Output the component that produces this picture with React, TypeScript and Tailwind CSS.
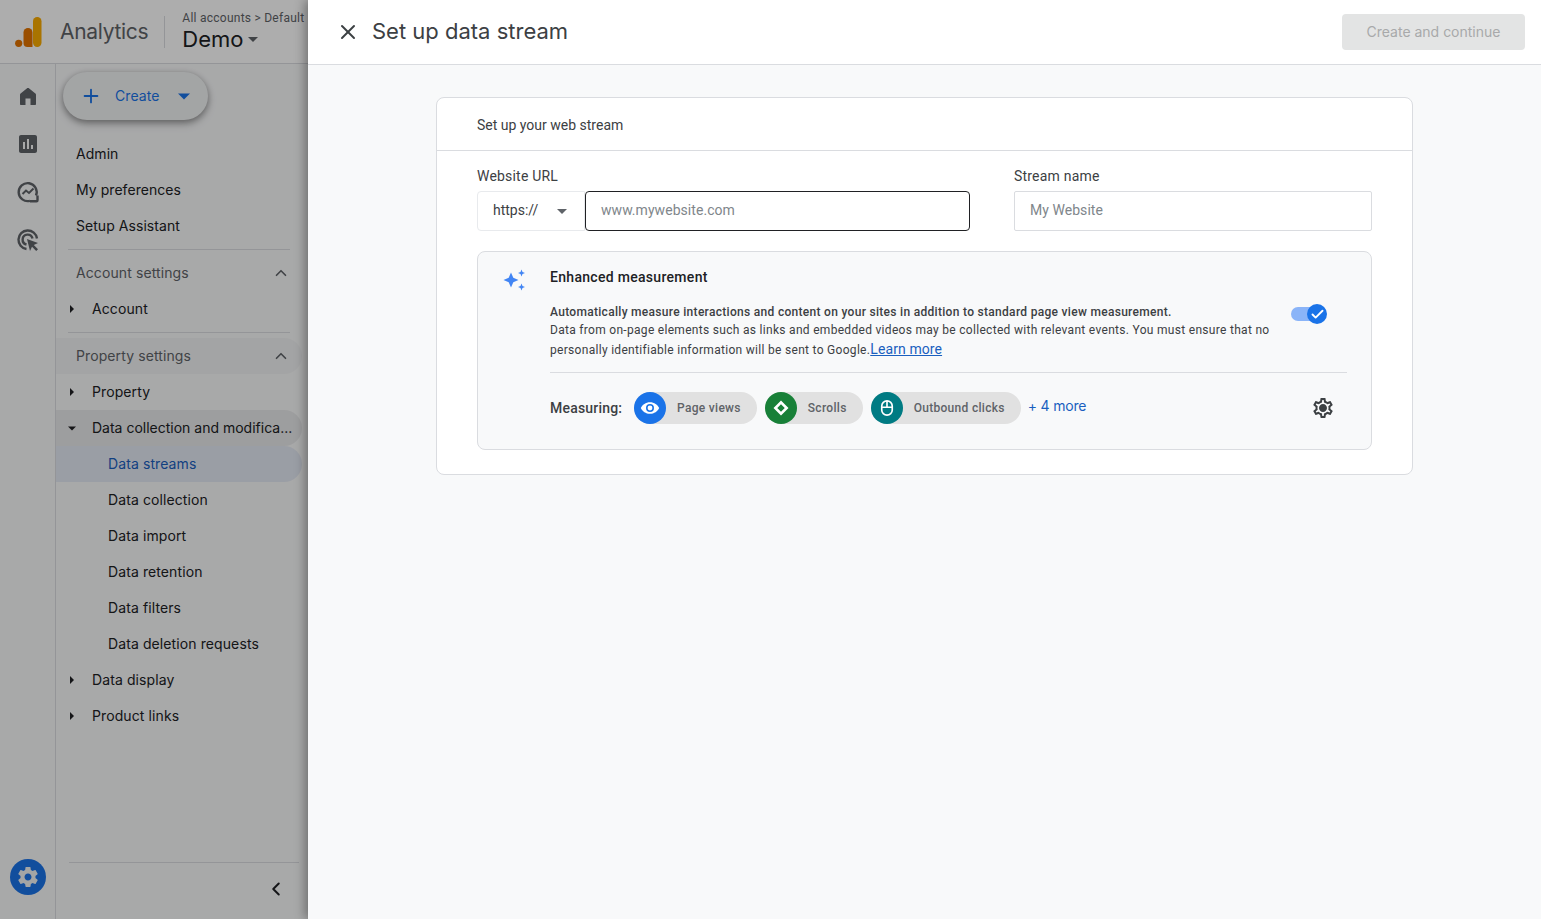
import React from 'react';
import { Plus, X, ChevronUp, ChevronLeft, Check } from 'lucide-react';

const GEAR_OUTLINE =
  'M19.43 12.98c.04-.32.07-.64.07-.98 0-.34-.03-.66-.07-.98l2.11-1.65c.19-.15.24-.42.12-.64l-2-3.46c-.09-.16-.26-.25-.44-.25-.06 0-.12.01-.17.03l-2.49 1c-.52-.4-1.08-.73-1.69-.98l-.38-2.65C14.46 2.18 14.25 2 14 2h-4c-.25 0-.46.18-.49.42l-.38 2.65c-.61.25-1.17.59-1.69.98l-2.49-1c-.06-.02-.12-.03-.18-.03-.17 0-.34.09-.43.25l-2 3.46c-.13.22-.07.49.12.64l2.11 1.65c-.04.32-.07.65-.07.98 0 .33.03.66.07.98l-2.11 1.65c-.19.15-.24.42-.12.64l2 3.46c.09.16.26.25.44.25.06 0 .12-.01.17-.03l2.49-1c.52.4 1.08.73 1.69.98l.38 2.65c.03.24.24.42.49.42h4c.25 0 .46-.18.49-.42l.38-2.65c.61-.25 1.17-.59 1.69-.98l2.49 1c.06.02.12.03.18.03.17 0 .34-.09.43-.25l2-3.46c.12-.22.07-.49-.12-.64l-2.11-1.65zm-1.98-1.71c.04.31.05.52.05.73 0 .21-.02.43-.05.73l-.14 1.13.89.7 1.08.84-.7 1.21-1.27-.51-1.04-.42-.9.68c-.43.32-.84.56-1.25.73l-1.06.43-.16 1.13-.2 1.35h-1.4l-.19-1.35-.16-1.13-1.06-.43c-.43-.18-.83-.41-1.23-.71l-.91-.7-1.06.43-1.27.51-.7-1.21 1.08-.84.89-.7-.14-1.13c-.03-.31-.05-.54-.05-.74s.02-.43.05-.73l.14-1.13-.89-.7-1.08-.84.7-1.21 1.27.51 1.04.42.9-.68c.43-.32.84-.56 1.25-.73l1.06-.43.16-1.13.2-1.35h1.39l.19 1.35.16 1.13 1.06.43c.43.18.83.41 1.23.71l.91.7 1.06-.43 1.27-.51.7 1.21-1.07.85-.89.7.14 1.13zM12 8c-2.21 0-4 1.79-4 4s1.79 4 4 4 4-1.79 4-4-1.79-4-4-4zm0 6c-1.1 0-2-.9-2-2s.9-2 2-2 2 .9 2 2-.9 2-2 2z';
const GEAR_FILLED =
  'M19.43 12.98c.04-.32.07-.64.07-.98 0-.34-.03-.66-.07-.98l2.11-1.65c.19-.15.24-.42.12-.64l-2-3.46c-.09-.16-.26-.25-.44-.25-.06 0-.12.01-.17.03l-2.49 1c-.52-.4-1.08-.73-1.69-.98l-.38-2.65C14.46 2.18 14.25 2 14 2h-4c-.25 0-.46.18-.49.42l-.38 2.65c-.61.25-1.17.59-1.69.98l-2.49-1c-.06-.02-.12-.03-.18-.03-.17 0-.34.09-.43.25l-2 3.46c-.13.22-.07.49.12.64l2.11 1.65c-.04.32-.07.65-.07.98 0 .33.03.66.07.98l-2.11 1.65c-.19.15-.24.42-.12.64l2 3.46c.09.16.26.25.44.25.06 0 .12-.01.17-.03l2.49-1c.52.4 1.08.73 1.69.98l.38 2.65c.03.24.24.42.49.42h4c.25 0 .46-.18.49-.42l.38-2.65c.61-.25 1.17-.59 1.69-.98l2.49 1c.06.02.12.03.18.03.17 0 .34-.09.43-.25l2-3.46c.12-.22.07-.49-.12-.64l-2.11-1.65zM12 15.5c-1.93 0-3.5-1.57-3.5-3.5s1.57-3.5 3.5-3.5 3.5 1.57 3.5 3.5-1.57 3.5-3.5 3.5z';

const Logo = () => (
  <svg width="28" height="32" viewBox="0 0 28 32" className="shrink-0">
    <rect x="18" y="1" width="8.500" height="30" rx="4.200" fill="#f9ab00" />
    <path d="M8.500 16.500a4.500 4.500 0 0 1 9 0V31H12.500A4 4 0 0 1 8.500 27z" fill="#e37400" />
    <circle cx="3.700" cy="27.300" r="3.600" fill="#e37400" />
  </svg>
);

const Caret = ({ dir, className }: { dir: 'right' | 'down'; className?: string }) => (
  <svg width="10" height="10" viewBox="0 0 10 10" className={className}>
    {dir === 'right' ? <path d="M3 1l4 4-4 4z" fill="currentColor" /> : <path d="M0 3h10L5 8z" fill="currentColor" />}
  </svg>
);

const RailIcon = ({ children }: { children: React.ReactNode }) => (
  <div className="w-[48px] h-[48px] flex items-center justify-center text-[#5f6368]">{children}</div>
);

const NavItem = ({ label, href }: { label: string; href?: boolean }) => (
  <div
    className={
      'h-[36px] flex items-center pl-[52px] mr-[6px] rounded-r-full text-sm tracking-[0.1px] ' +
      (href ? 'bg-[#e4e9f3] text-[#1a5fbf]' : 'text-[#202124]')
    }
  >
    {label}
  </div>
);

const Branch = ({ label, open, shaded }: { label: string; open?: boolean; shaded?: boolean }) => (
  <div
    className={
      'h-[36px] flex items-center pl-[11px] mr-[6px] rounded-r-full text-sm text-[#202124] whitespace-nowrap ' +
      (shaded ? 'bg-[#e8e9ea] tracking-normal' : 'tracking-[0.1px]')
    }
  >
    <Caret dir={open ? 'down' : 'right'} className={open ? 'w-[8px] ml-[1px] mr-[16px] shrink-0' : 'mr-[15px] shrink-0'} />
    <span>{label}</span>
  </div>
);

const SectionHead = ({ label, shaded }: { label: string; shaded?: boolean }) => (
  <div
    className={
      'h-[36px] flex items-center justify-between pl-[20px] pr-[12px] mr-[6px] rounded-r-full text-sm tracking-[0.1px] text-[#5f6368] ' +
      (shaded ? 'bg-[#f1f2f3]' : '')
    }
  >
    <span>{label}</span>
    <ChevronUp size={18} strokeWidth={2.2} />
  </div>
);

const Chip = ({ label, color, icon }: { label: string; color: string; icon: React.ReactNode }) => (
  <div className="h-[32px] flex items-center bg-[#e1e1e1] rounded-full pr-[16px]">
    <div className={'w-[32px] h-[32px] rounded-full flex items-center justify-center mr-[11px] ' + color}>{icon}</div>
    <span className="text-xs font-medium tracking-[0.3px] text-[#5f6368]">{label}</span>
  </div>
);

export default function App() {
  return (
    <div className="flex w-full h-[919px] overflow-hidden bg-[#f8f9fa] font-['Roboto',sans-serif] text-[#202124]">
      {/* dimmed app behind the drawer */}
      <div className="relative w-[308px] shrink-0 flex flex-col bg-white font-['Inter',sans-serif]">
        <div className="h-[64px] shrink-0 flex items-center pl-[15px] border-b border-[#dadce0] whitespace-nowrap">
          <Logo />
          <span className="ml-[17px] text-[21px] tracking-[-0.3px] text-[#5f6368]">Analytics</span>
          <div className="w-px h-[32px] bg-[#dadce0] ml-[16px] mr-[17px]" />
          <div className="flex flex-col">
            <span className="text-xs leading-[14px] text-[#5f6368] font-['Roboto',sans-serif] tracking-[0.25px]">
              All accounts &gt; Default
            </span>
            <span className="flex items-center text-[22px] leading-[28px] text-[#202124]">
              Demo
              <Caret dir="down" className="ml-[4px] text-[#5f6368]" />
            </span>
          </div>
        </div>

        <div className="flex-1 flex min-h-0 bg-[#f8f9fa]">
          <div className="w-[56px] shrink-0 flex flex-col items-center pt-[8px] pb-[24px] border-r border-[#dadce0]">
            <RailIcon>
              <svg width="24" height="24" viewBox="0 0 24 24" fill="currentColor">
                <path d="M4 20v-9.200c0-.5.2-.9.6-1.200l6.200-5.100c.7-.6 1.700-.6 2.400 0l6.200 5.100c.4.3.6.7.6 1.200V20c0 .6-.4 1-1 1h-4.500v-6.500h-5V21H5c-.6 0-1-.4-1-1z" />
              </svg>
            </RailIcon>
            <RailIcon>
              <svg width="24" height="24" viewBox="0 0 24 24" fill="currentColor">
                <path d="M19 3H5c-1.100 0-2 .9-2 2v14c0 1.100.9 2 2 2h14c1.100 0 2-.9 2-2V5c0-1.100-.9-2-2-2zM9 17H7v-7h2v7zm4 0h-2V7h2v10zm4 0h-2v-4h2v4z" />
              </svg>
            </RailIcon>
            <RailIcon>
              <svg width="24" height="24" viewBox="0 0 24 24" fill="none" stroke="currentColor" strokeWidth="2.400">
                <path d="M20 15.500A9 9 0 1 0 14 20.800" />
                <path d="M6.500 14l3.500-3.500 3 2.500 4.500-4.500" strokeWidth="2" />
                <path d="M14 21.300h6.500a1 1 0 0 0 1-1V15.500" strokeWidth="2.400" />
              </svg>
            </RailIcon>
            <RailIcon>
              <svg width="24" height="24" viewBox="0 0 24 24" fill="none" stroke="currentColor" strokeWidth="2.400">
                <path d="M10.500 21A9.300 9.300 0 1 1 21 10.500" />
                <path d="M10.500 16.500A5 5 0 1 1 16.500 10.500" />
                <path d="M11 11l11 4-4.200 2 4.200 4.200-1.800 1.800-4.200-4.200-2 4.200z" fill="currentColor" stroke="none" />
              </svg>
            </RailIcon>
            <div className="mt-auto w-[36px] h-[36px] rounded-full bg-[#1a73e8] flex items-center justify-center">
              <svg width="24" height="24" viewBox="0 0 24 24" fill="#f1f3f4" fillRule="evenodd">
                <path d={GEAR_FILLED} />
              </svg>
            </div>
          </div>

          <div className="flex-1 min-w-0 flex flex-col pt-[8px]">
            <div className="h-[48px] w-[145px] ml-[7px] shrink-0 rounded-full bg-[#f1f3f4] shadow-[0_2px_6px_rgba(0,0,0,0.3),0_4px_10px_rgba(0,0,0,0.2)] flex items-center pl-[17px] text-[#1a73e8]">
              <Plus size={22} strokeWidth={2} />
              <span className="ml-[13px] text-sm tracking-[0.1px]">Create</span>
              <Caret dir="down" className="ml-[18px] w-[12px] h-[12px]" />
            </div>

            <div className="mt-[16px] text-sm tracking-[0.05px] text-[#202124]">
              <div className="h-[36px] flex items-center pl-[20px]">Admin</div>
              <div className="h-[36px] flex items-center pl-[20px]">My preferences</div>
              <div className="h-[36px] flex items-center pl-[20px]">Setup Assistant</div>
            </div>

            <div className="h-px bg-[#dadce0] ml-[12px] mr-[18px] mt-[5px] mb-[5px]" />
            <SectionHead label="Account settings" />
            <Branch label="Account" />
            <div className="h-px bg-[#dadce0] ml-[12px] mr-[18px] mt-[5px] mb-[5px]" />
            <SectionHead label="Property settings" shaded />
            <Branch label="Property" />
            <Branch label="Data collection and modifica..." open shaded />
            <NavItem label="Data streams" href />
            <NavItem label="Data collection" />
            <NavItem label="Data import" />
            <NavItem label="Data retention" />
            <NavItem label="Data filters" />
            <NavItem label="Data deletion requests" />
            <Branch label="Data display" />
            <Branch label="Product links" />

            <div className="mt-auto h-[57px] ml-[13px] mr-[9px] border-t border-[#dadce0] flex items-center justify-end pr-[12px] pb-[4px] text-[#202124]">
              <ChevronLeft size={22} strokeWidth={2.2} />
            </div>
          </div>
        </div>

        <div className="absolute inset-0 bg-black/32" />
      </div>

      {/* drawer */}
      <div className="relative z-10 flex-1 min-w-0 flex flex-col bg-[#f8f9fa] shadow-[-3px_0_10px_rgba(0,0,0,0.35)]">
        <div className="h-[65px] shrink-0 bg-white border-b border-[#dadce0] flex items-center pl-[28px] pr-[16px]">
          <X size={24} strokeWidth={2} className="text-[#3c4043]" />
          <h1 className="ml-[12px] pb-[2px] text-[22px] font-['Inter',sans-serif] text-[#3c4043]">Set up data stream</h1>
          <button className="ml-auto w-[183px] h-[36px] rounded-[4px] bg-[#e3e4e4] text-sm font-['Inter',sans-serif] text-[#a8a9aa]">
            Create and continue
          </button>
        </div>

        <div className="pt-[32px] px-[128px]">
          <div className="bg-white border border-[#dadce0] rounded-lg">
            <div className="h-[53px] flex items-center pl-[40px] pt-[2px] border-b border-[#dadce0] text-sm text-[#3c4043]">
              Set up your web stream
            </div>
            <div className="pt-[16px] px-[40px] pb-[24px]">
              <div className="flex">
                <div className="w-[493px]">
                  <div className="text-sm leading-[18px] tracking-[0.2px] text-[#3c4043] mb-[6px]">Website URL</div>
                  <div className="flex h-[40px]">
                    <div className="w-[108px] border border-[#e8eaed] rounded-l-[4px] flex items-center pl-[15px] pb-[2px] text-sm text-[#3c4043]">
                      https://
                      <Caret dir="down" className="ml-[19px] mt-[2px] text-[#5f6368]" />
                    </div>
                    <div className="w-[385px] border border-[#202124] rounded-[4px] flex items-center pl-[15px] pb-[2px] text-sm tracking-[0.05px] text-[#80868b]">
                      www.mywebsite.com
                    </div>
                  </div>
                </div>
                <div className="ml-[44px] flex-1">
                  <div className="text-sm leading-[18px] tracking-[0.2px] text-[#3c4043] mb-[6px]">Stream name</div>
                  <div className="h-[40px] border border-[#dadce0] rounded-[2px] flex items-center pl-[15px] pb-[2px] text-sm tracking-[0.05px] text-[#80868b]">
                    My Website
                  </div>
                </div>
              </div>

              <div className="mt-[20px] h-[199px] bg-[#f8f9fa] border border-[#dadce0] rounded-lg flex">
                <div className="w-[72px] shrink-0 pt-[15px] pl-[24px]">
                  <svg width="24" height="26" viewBox="0 0 24 26" fill="#4285f4">
                    <path d="M9 5.500l2.300 5.200 5.200 2.300-5.200 2.300L9 20.500l-2.300-5.200L1.500 13l5.200-2.300z" />
                    <path d="M19.500 2.500l1 2.500 2.500 1-2.500 1-1 2.500-1-2.500-2.500-1 2.500-1z" />
                    <path d="M19.500 16.500l1 2.500 2.500 1-2.500 1-1 2.500-1-2.500-2.500-1 2.500-1z" />
                  </svg>
                </div>
                <div className="flex-1 min-w-0 pr-[24px]">
                  <div className="pt-[15px] text-sm leading-[20px] font-medium tracking-[0.3px] text-[#202124]">Enhanced measurement</div>
                  <div className="flex mt-[15px]">
                    <div className="w-[741px] text-xs tracking-[0.3px] text-[#3c4043]">
                      <div className="leading-[20px] font-medium">
                        Automatically measure interactions and content on your sites in addition to standard page view measurement.
                      </div>
                      <div className="leading-[20px] -mt-[2px]">
                        Data from on-page elements such as links and embedded videos may be collected with relevant events. You must ensure that no personally identifiable information will be sent to Google.
                        <span className="text-sm leading-none tracking-[0.1px] underline text-[#1a5fbf]">Learn more</span>
                      </div>
                    </div>
                    <div className="relative w-[36px] h-[14px] mt-[5px]">
                      <div className="h-full w-[30px] rounded-full bg-[#8ab4f8]" />
                      <div className="absolute right-0 -top-[3px] w-[20px] h-[20px] rounded-full bg-[#1a73e8] flex items-center justify-center text-white">
                        <Check size={15} strokeWidth={3} />
                      </div>
                    </div>
                  </div>
                  <div className="mt-[12px] h-px bg-[#dadce0]" />
                  <div className="flex items-center pt-[19px]">
                    <span className="w-[84px] shrink-0 text-sm font-medium tracking-[0.2px] text-[#3c4043]">Measuring:</span>
                    <div className="flex items-center gap-[8px]">
                      <Chip
                        label="Page views"
                        color="bg-[#1a73e8]"
                        icon={
                          <svg width="20" height="20" viewBox="0 0 24 24" fill="#fff" fillRule="evenodd">
                            <path d="M12 5C7 5 2.700 8.100 1 12c1.700 3.900 6 7 11 7s9.300-3.100 11-7c-1.700-3.900-6-7-11-7zm0 11.800A4.800 4.800 0 1 1 12 7.200a4.800 4.800 0 0 1 0 9.600zm0-7.700a2.900 2.900 0 1 0 0 5.800 2.900 2.900 0 0 0 0-5.800z" />
                          </svg>
                        }
                      />
                      <Chip
                        label="Scrolls"
                        color="bg-[#188038]"
                        icon={
                          <svg width="18" height="18" viewBox="0 0 24 24" fill="#fff" fillRule="evenodd">
                            <path d="M12 2l10 10-10 10L2 12zM12 7l-5 5 5 5 5-5z" />
                          </svg>
                        }
                      />
                      <Chip
                        label="Outbound clicks"
                        color="bg-[#007b83]"
                        icon={
                          <svg width="18" height="18" viewBox="0 0 24 24" fill="none" stroke="#fff" strokeWidth="2.200">
                            <rect x="5" y="2.500" width="14" height="19" rx="7" />
                            <path d="M12 2.500V11M5 11h14" />
                          </svg>
                        }
                      />
                    </div>
                    <span className="ml-[7px] -mt-[4px] text-sm tracking-[-0.2px] font-['Inter',sans-serif] text-[#1a5fbf]">+ 4 more</span>
                    <svg width="24" height="24" viewBox="0 0 24 24" fill="#3c4043" className="ml-auto mr-[12px]">
                      <path d={GEAR_OUTLINE} />
                      <circle cx="12" cy="12" r="2.500" />
                    </svg>
                  </div>
                </div>
              </div>
            </div>
          </div>
        </div>
      </div>
    </div>
  );
}
